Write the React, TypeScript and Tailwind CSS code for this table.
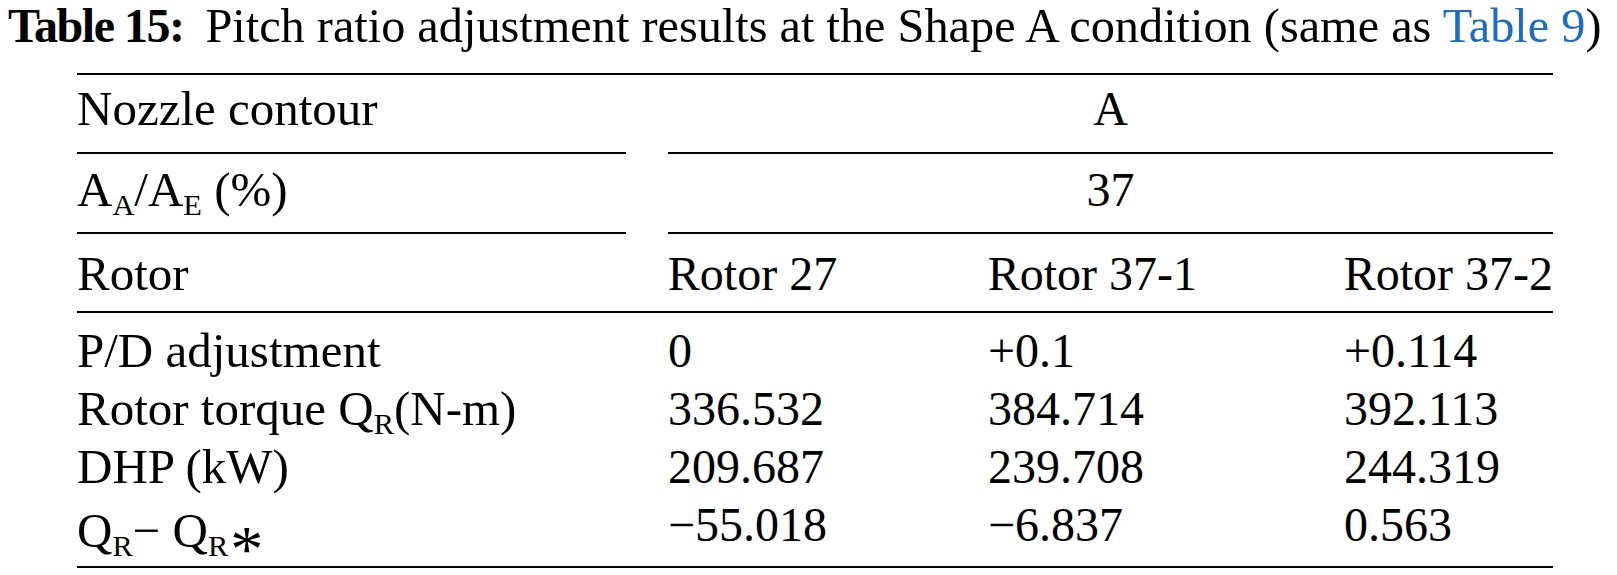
const Sub = ({ children }: { children: React.ReactNode }) => (
  <sub className="bottom-[-9px] text-[0.62em]">{children}</sub>
);

// math asterisk in the Times face, dropped to sit beside the subscript
const Star = () => <span className="relative top-[24px] ml-[2px] text-[66px] leading-[58px]">*</span>;

const ROWS = [
  { label: <>P/D adjustment</>, cells: ["0", "+0.1", "+0.114"] },
  {
    label: (
      <>
        Rotor torque Q<Sub>R</Sub>(N-m)
      </>
    ),
    cells: ["336.532", "384.714", "392.113"],
  },
  { label: <>DHP (kW)</>, cells: ["209.687", "239.708", "244.319"] },
  {
    label: (
      <>
        Q<Sub>R</Sub>− Q<Sub>R</Sub>
        <Star />
      </>
    ),
    cells: ["−55.018", "−6.837", "0.563"],
  },
];

function SplitRow({ label, value, className }: { label: React.ReactNode; value: string; className: string }) {
  return (
    <div className="flex">
      <div className={`w-[549px] border-b-2 border-black text-[49px] ${className}`}>{label}</div>
      <div className="w-[42px]" />
      <div className={`flex-1 border-b-2 border-black text-center ${className}`}>{value}</div>
    </div>
  );
}

export default function App() {
  return (
    <div className="h-[575px] w-[1617px] overflow-hidden whitespace-nowrap bg-white font-['Liberation_Serif','Times_New_Roman',serif] text-[48px] leading-[58px] text-black">
      <div className="flex h-[52px] items-baseline pl-[8px] leading-[52px]">
        <span className="mr-[22px] font-bold tracking-[-1.5px]">Table 15:</span>
        <span className="text-[48.3px]">
          Pitch ratio adjustment results at the Shape A condition (same as{" "}
          <span className="text-[#1a6dc0]">Table 9</span>)
        </span>
      </div>

      <div className="ml-[77px] mt-[21px] w-[1476px] border-t-2 border-black">
        <SplitRow label="Nozzle contour" value="A" className="pt-[5px] pb-[14px]" />
        <SplitRow
          label={
            <>
              A<Sub>A</Sub>/A<Sub>E</Sub> (%)
            </>
          }
          value="37"
          className="pt-[7px] pb-[13px]"
        />

        <div className="flex border-b-2 border-black pt-[11px] pb-[8px]">
          <div className="w-[591px] text-[49px]">Rotor</div>
          <div className="w-[320px]">Rotor 27</div>
          <div className="w-[356px]">Rotor 37-1</div>
          <div className="flex-1">Rotor 37-2</div>
        </div>

        <div className="flex flex-col border-b-2 border-black pt-[9px] pb-[12px]">
          {ROWS.map((r, i) => (
            <div key={i} className="flex h-[58px]">
              <div className="w-[591px] text-[49px]">{r.label}</div>
              <div className="w-[320px]">{r.cells[0]}</div>
              <div className="w-[356px]">{r.cells[1]}</div>
              <div className="flex-1">{r.cells[2]}</div>
            </div>
          ))}
        </div>
      </div>
    </div>
  );
}
